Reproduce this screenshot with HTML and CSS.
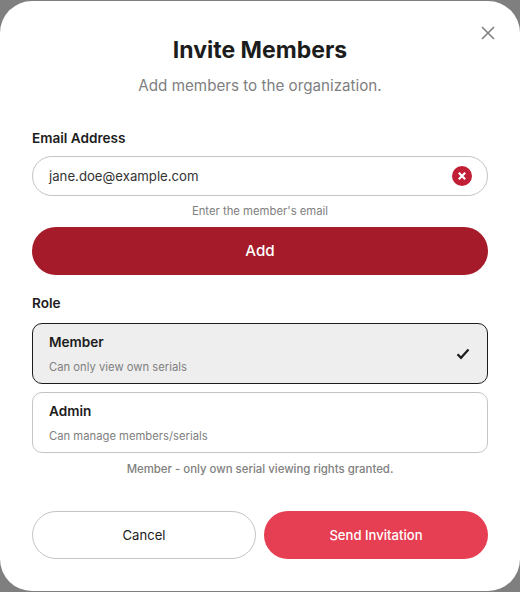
FILE: index.html
```html
<!DOCTYPE html>
<html lang="en">
<head>
    <meta charset="UTF-8">
    <meta name="viewport" content="width=device-width, initial-scale=1.0">
    <title>Invite Members</title>
    <link rel="stylesheet" href="styles.css">
</head>
<body>
    <div class="modal">
        <button class="close-btn" aria-label="Close">
            <svg width="14" height="14" viewBox="0 0 14 14"><path d="M1 1L13 13M13 1L1 13" stroke="#808080" stroke-width="1.6" fill="none"/></svg>
        </button>
        <h1 class="title">Invite Members</h1>
        <p class="subtitle">Add members to the organization.</p>

        <div class="label email-label">Email Address</div>
        <div class="input-box">
            <span class="input-value">jane.doe@example.com</span>
            <span class="clear-icon">
                <svg width="10" height="10" viewBox="0 0 10 10"><path d="M1.8 1.8L8.2 8.2M8.2 1.8L1.8 8.2" stroke="#fff" stroke-width="2.2" fill="none"/></svg>
            </span>
        </div>
        <div class="hint">Enter the member's email</div>
        <button class="add-btn">Add</button>

        <div class="label role-label">Role</div>
        <div class="role-card selected">
            <div class="role-text">
                <div class="role-name">Member</div>
                <div class="role-desc">Can only view own serials</div>
            </div>
            <svg width="14" height="12" viewBox="0 0 14 12"><path d="M1.5 6.2L5 9.8L12.5 1.5" stroke="#1c1c1c" stroke-width="2.2" fill="none"/></svg>
        </div>
        <div class="role-card">
            <div class="role-text">
                <div class="role-name">Admin</div>
                <div class="role-desc">Can manage members/serials</div>
            </div>
        </div>
        <div class="role-note">Member - only own serial viewing rights granted.</div>

        <div class="actions">
            <button class="cancel-btn">Cancel</button>
            <button class="send-btn">Send Invitation</button>
        </div>
    </div>
</body>
</html>
```

FILE: styles.css
```css
* {
    box-sizing: border-box;
}
html, body {
    height: 100%;
}
body {
    margin: 0;
    padding: 1px 0;
    overflow: hidden;
    background-color: #7f7f7f;
    font-family: Inter, "Liberation Sans", sans-serif;
    color: #1c1c1c;
}
.modal {
    position: relative;
    height: 590px;
    padding: 32px 32px 0;
    background-color: #fff;
    border-radius: 32px;
}
.close-btn {
    position: absolute;
    top: 25px;
    right: 25px;
    width: 14px;
    height: 14px;
    padding: 0;
    border: none;
    background: none;
    display: flex;
}
.title {
    margin: 0;
    font-size: 23px;
    line-height: 34px;
    font-weight: 700;
    text-align: center;
}
.subtitle {
    margin: 7px 0 0;
    font-size: 15.2px;
    line-height: 24px;
    color: #808080;
    text-align: center;
}
.label {
    font-size: 13.6px;
    line-height: 20px;
    font-weight: 600;
}
.email-label {
    margin-top: 30px;
}
.input-box {
    display: flex;
    align-items: center;
    justify-content: space-between;
    height: 40px;
    margin-top: 8px;
    padding: 0 15px 0 16px;
    border: 1px solid #c4c4c4;
    border-radius: 20px;
}
.input-value {
    font-size: 13.2px;
    color: #333;
}
.clear-icon {
    display: flex;
    align-items: center;
    justify-content: center;
    width: 20px;
    height: 20px;
    border-radius: 50%;
    background-color: #c01f35;
}
.hint {
    margin-top: 7px;
    font-size: 11.3px;
    line-height: 16px;
    color: #808080;
    text-align: center;
}
.add-btn {
    display: block;
    width: 100%;
    height: 48px;
    margin-top: 8px;
    padding-bottom: 2px;
    border: none;
    border-radius: 24px;
    background-color: #a61b29;
    color: #fff;
    font-family: inherit;
    font-size: 15.2px;
    font-weight: 500;
}
.role-label {
    margin-top: 18px;
}
.role-card {
    display: flex;
    align-items: center;
    justify-content: space-between;
    height: 61px;
    margin-top: 8px;
    padding: 0 17px 0 16px;
    border: 1px solid #c4c4c4;
    border-radius: 10px;
}
.role-card.selected {
    margin-top: 10px;
    background-color: #eee;
    border-color: #1c1c1c;
}
.role-text {
    margin-bottom: 1px;
}
.role-name {
    font-size: 13.6px;
    line-height: 20px;
    font-weight: 600;
}
.role-desc {
    margin-top: 7px;
    font-size: 11.25px;
    line-height: 16px;
    color: #808080;
}
.role-note {
    margin-top: 8px;
    font-size: 11.4px;
    line-height: 16px;
    font-weight: 500;
    color: #808080;
    text-align: center;
}
.actions {
    display: grid;
    grid-template-columns: 1fr 1fr;
    gap: 8px;
    margin-top: 34px;
}
.actions button {
    height: 48px;
    border-radius: 24px;
    font-family: inherit;
    font-size: 13.1px;
    font-weight: 500;
}
.actions .cancel-btn {
    border: 1px solid #c4c4c4;
    background-color: #fff;
    color: #1c1c1c;
    font-weight: 400;
}
.send-btn {
    border: none;
    background-color: #e63e52;
    color: #fff;
}
```
